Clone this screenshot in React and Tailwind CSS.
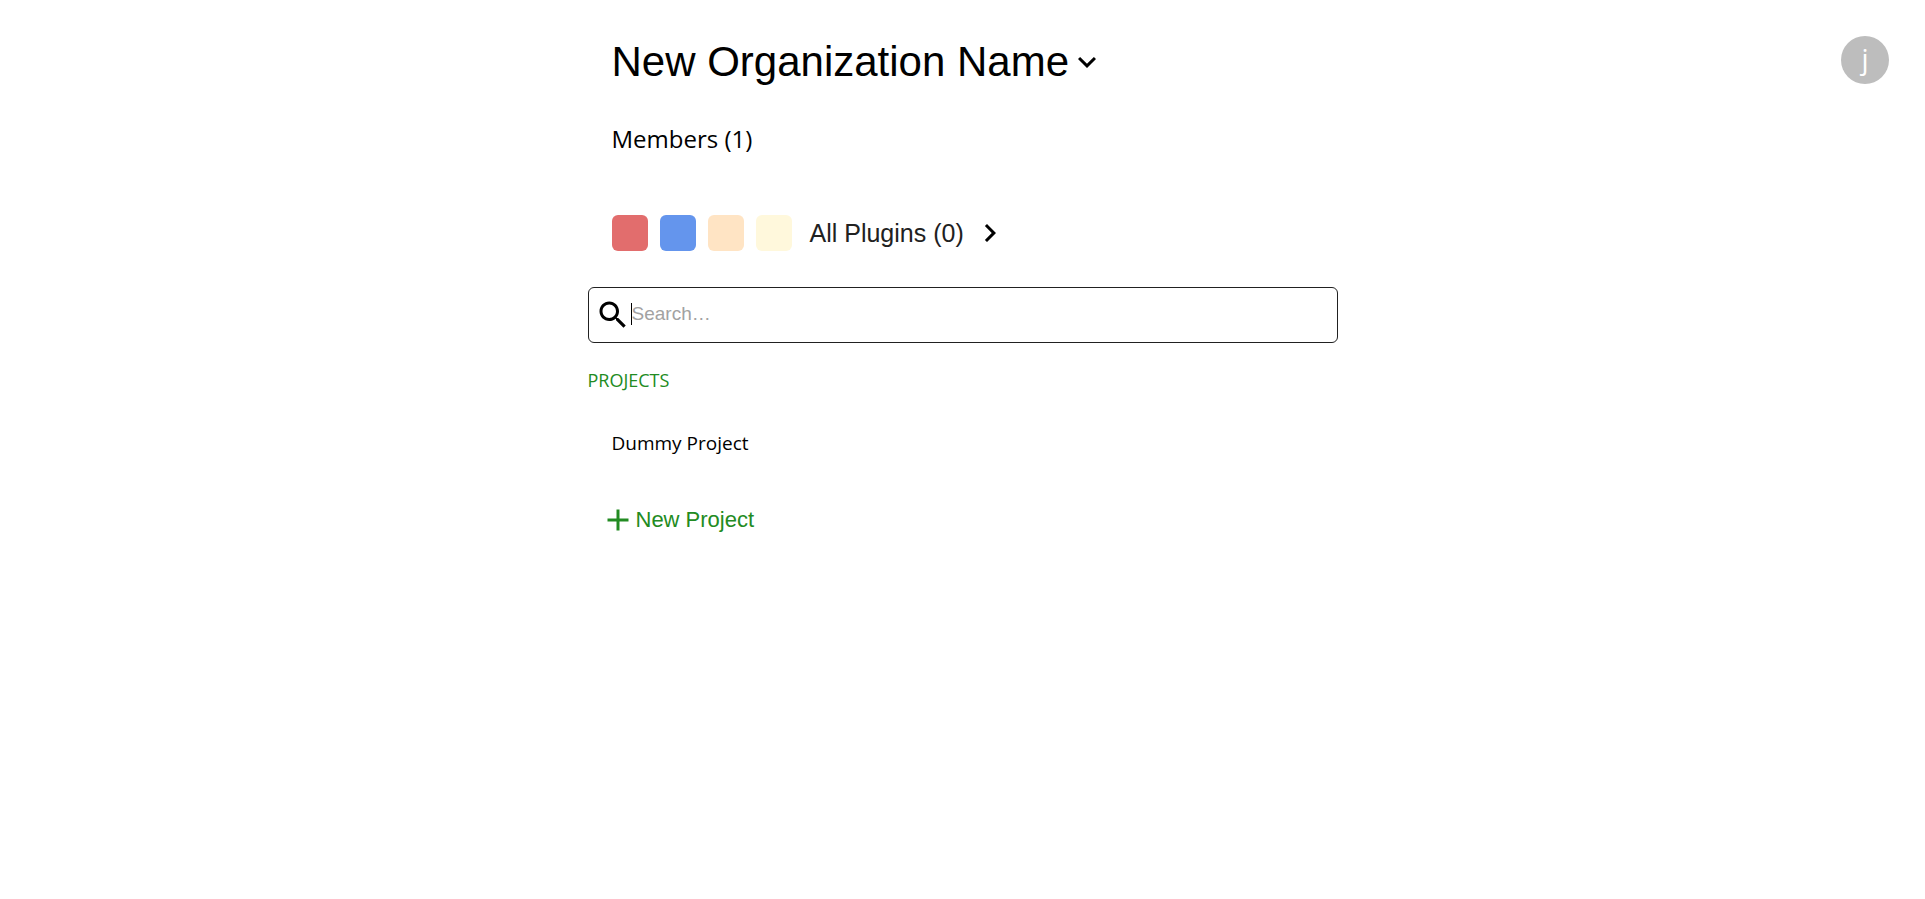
const swatches = ["bg-[#e26d6d]", "bg-[#6495ed]", "bg-[#ffe4c4]", "bg-[#fff8dc]"];

function Icon({ d, className }) {
  return (
    <svg viewBox="0 0 24 24" fill="currentColor" aria-hidden="true" className={className}>
      <path d={d} />
    </svg>
  );
}

const SEARCH =
  "M15.5 14h-.79l-.28-.27C15.41 12.59 16 11.11 16 9.5 16 5.91 13.09 3 9.5 3S3 5.91 3 9.5 5.91 16 9.5 16c1.61 0 3.09-.59 4.23-1.57l.27.28v.79l5 4.99L20.49 19l-4.99-5zm-6 0C7.01 14 5 11.99 5 9.5S7.01 5 9.5 5 14 7.01 14 9.5 11.99 14 9.5 14z";
const EXPAND = "M16.59 8.59L12 13.17 7.41 8.59 6 10l6 6 6-6z";
const NEXT = "M10 6L8.59 7.41 13.17 12l-4.58 4.59L10 18l6-6z";
const ADD = "M19 13h-6v6h-2v-6H5v-2h6V5h2v6h6v2z";

export default function App() {
  return (
    <div className="grid grid-cols-[1fr_minmax(0,750px)_1fr] bg-white font-['Open_Sans',sans-serif] text-black">
      <main className="col-start-2 flex flex-col pt-7">
        <h1 className="px-6 font-['Liberation_Sans',sans-serif] text-[42px] leading-[68px]">
          <button type="button" className="flex items-center">
            New Organization Name
            <Icon d={EXPAND} className="size-9" />
          </button>
        </h1>
        <a href="#members" className="mt-[23px] self-start px-6 text-2xl leading-10">
          Members (1)
        </a>
        <div className="mt-14 flex items-center gap-3 px-6">
          {swatches.map((color) => (
            <span key={color} className={`size-9 rounded-md ${color}`} />
          ))}
          <button
            type="button"
            className="ml-1.5 flex items-center gap-2 font-['Liberation_Sans',sans-serif] text-[25px] leading-9 text-[#212121]"
          >
            All Plugins (0)
            <Icon d={NEXT} className="size-9 text-black" />
          </button>
        </div>
        <label className="mt-9 flex h-14 items-center rounded-md border border-[#212121] pl-1.5">
          <Icon d={SEARCH} className="size-9 shrink-0" />
          <span className="flex min-w-0 flex-1 items-center pb-0.5">
            <span className="h-5.5 w-px bg-black" aria-hidden="true" />
            <input
              type="text"
              aria-label="Search"
              placeholder="Search…"
              className="min-w-0 flex-1 bg-transparent font-['Liberation_Sans',sans-serif] text-[19px] leading-6 outline-none placeholder:text-[#a2a2a2]"
            />
          </span>
        </label>
        <h2 className="mt-[23px] text-lg leading-7 text-[#228b22] uppercase">Projects</h2>
        <a href="#dummy-project" className="mt-[33px] self-start px-6 text-[19px] leading-8">
          Dummy Project
        </a>
        <button
          type="button"
          className="mt-[43px] ml-3 flex items-center self-start font-['Liberation_Sans',sans-serif] text-[22px] leading-8 text-[#228b22]"
        >
          <Icon d={ADD} className="size-9" />
          New Project
        </button>
      </main>
      <button
        type="button"
        aria-label="Account"
        className="mt-9 mr-9 flex size-12 items-center justify-center justify-self-end rounded-full bg-[#bdbdbd] pb-1 text-[28px] leading-8 font-medium text-white"
      >
        j
      </button>
    </div>
  );
}
